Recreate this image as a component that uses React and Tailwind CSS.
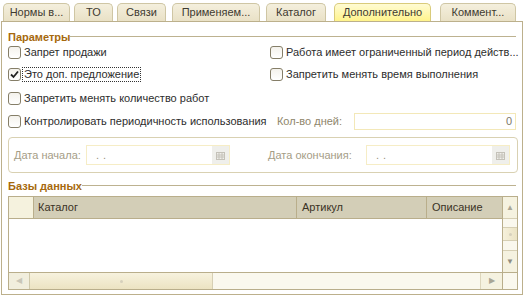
import React from "react";

const tabs = [
    { label: "Нормы в...", cls: "ml-[3px] w-[67px]" },
    { label: "ТО", cls: "ml-[4px] w-[39px]" },
    { label: "Связи", cls: "ml-[4px] w-[49px]" },
    { label: "Применяем...", cls: "ml-[6px] w-[88px]" },
    { label: "Каталог", cls: "ml-[6px] w-[60px]" },
    { label: "Дополнительно", cls: "ml-[8px] w-[97px]", active: true },
    { label: "Коммент...", cls: "ml-[9px] w-[76px]" },
];

const CheckBox = ({ checked }) => (
    <span className="w-[13px] h-[13px] shrink-0 rounded-[3px] border border-[#857e68] bg-gradient-to-b from-[#f4f2ec] to-white flex items-center justify-center">
        {checked && (
            <svg width="9" height="9" viewBox="0 0 9 9">
                <path d="M1 4.5 L3.5 7 L8 1.5" fill="none" stroke="#222" strokeWidth="1.8" />
            </svg>
        )}
    </span>
);

const Option = ({ label, checked, focused, className = "" }) => (
    <div className={"flex items-center h-[13px] shrink-0 " + className}>
        <CheckBox checked={checked} />
        <span
            className={
                "ml-[1px] whitespace-nowrap leading-[13px] " +
                (focused ? "border border-dotted border-[#333] px-[1px]" : "pl-[2px]")
            }
        >
            {label}
        </span>
    </div>
);

const SectionTitle = ({ title }) => (
    <div className="flex items-start h-[13px]">
        <span className="font-bold text-[#a6690d] leading-[13px]">{title}</span>
        <span className="flex-1 mt-[5px] border-t border-[#bdb290]" />
    </div>
);

const DateInput = () => (
    <div className="w-[144px] h-[20px] flex border border-[#f6edc6] bg-white">
        <span className="flex-1 pl-[9px] leading-[18px] text-[#9a937f] tracking-[4px]">..</span>
        <span className="w-[17px] bg-[#efefeb] flex items-center justify-center">
            <svg width="9" height="9" viewBox="0 0 9 9">
                <rect x="0.5" y="1.5" width="8" height="7" fill="none" stroke="#c4c1b8" />
                <path d="M0.5 4 H8.5 M0.5 6 H8.5 M3 1.5 V8.5 M6 1.5 V8.5" stroke="#c4c1b8" />
            </svg>
        </span>
    </div>
);

export default function App() {
    return (
        <div className="w-[526px] h-[299px] bg-white overflow-hidden font-['Liberation_Sans',Arial,sans-serif] text-[11px] text-[#2d2d2d]">
            <div className="flex items-end h-[21px]">
                {tabs.map((t) => (
                    <div
                        key={t.label}
                        className={
                            t.cls +
                            " h-[18px] rounded-t-[5px] border border-b-0 flex items-center justify-center whitespace-nowrap text-[#3e3a30] " +
                            (t.active
                                ? "bg-gradient-to-b from-[#fffbd2] to-[#fff38a] border-[#d9cb7a]"
                                : "bg-gradient-to-b from-[#f4efdd] to-[#e9e1c6] border-[#cfc6a4]")
                        }
                    >
                        {t.label}
                    </div>
                ))}
            </div>

            <div className="ml-[1px] w-[522px] h-[274px] border border-[#bcb08c] px-[6px] pt-[9px]">
                <SectionTitle title="Параметры" />

                <div className="flex mt-[2px]">
                    <Option label="Запрет продажи" className="w-[262px]" />
                    <Option label="Работа имеет ограниченный период действ..." />
                </div>

                <div className="flex mt-[9px]">
                    <Option label="Это доп. предложение" checked focused className="w-[262px]" />
                    <Option label="Запретить менять время выполнения" />
                </div>

                <Option label="Запретить менять количество работ" className="mt-[11px]" />

                <div className="flex items-center h-[17px] mt-[8px]">
                    <div className="w-[262px] flex items-center">
                        <CheckBox />
                        <span className="ml-[1px] pl-[2px] whitespace-nowrap">
                            Контролировать периодичность использования
                        </span>
                    </div>
                    <span className="ml-[8px] w-[77px] text-[#8f866b] whitespace-nowrap">Кол-во дней:</span>
                    <div className="w-[163px] h-[17px] border border-[#f3e8b8] text-right pr-[3px] leading-[15px] text-[#7d786a]">
                        0
                    </div>
                </div>

                <div className="mt-[7px] w-[510px] h-[36px] rounded-[4px] border border-[#d9d1b2] flex items-center pl-[5px]">
                    <span className="w-[72px] text-[#a59d86]">Дата начала:</span>
                    <DateInput />
                    <span className="ml-[38px] w-[98px] text-[#a59d86]">Дата окончания:</span>
                    <DateInput />
                </div>

                <div className="mt-[7px]">
                    <SectionTitle title="Базы данных" />
                </div>

                <div className="mt-[3px] w-[510px] h-[94px] border border-[#b9ae8b] flex flex-col">
                    <div className="flex h-[75px]">
                        <div className="w-[493px] flex flex-col">
                            <div className="flex h-[22px] bg-[#d3ceb7] border-b border-[#b9ae8b] text-[#3a3225]">
                                <div className="w-[25px] bg-[#f5f2de] border-r border-[#b9ae8b]" />
                                <div className="w-[263px] border-r border-[#b9ae8b] pl-[4px] leading-[21px]">Каталог</div>
                                <div className="w-[130px] border-r border-[#b9ae8b] pl-[5px] leading-[21px]">Артикул</div>
                                <div className="flex-1 pl-[5px] leading-[21px]">Описание</div>
                            </div>
                            <div className="flex-1 bg-white" />
                        </div>
                        <div className="w-[15px] border-l border-[#b9ae8b] flex flex-col bg-[#faf8ee]">
                            <div className="h-[22px] bg-[#f5f2e0] border-b border-[#d6cfb4] flex items-center justify-center text-[8px] text-[#a9a695]">
                                ▲
                            </div>
                            <div className="h-[8px]" />
                            <div className="h-[14px] border-y border-[#d6cfb4] bg-gradient-to-r from-[#f6f1dc] to-[#ebe3c4] flex items-center justify-center">
                                <span className="w-[3px] h-[3px] rounded-full bg-[#d6d0bc]" />
                            </div>
                            <div className="flex-1" />
                            <div className="h-[22px] border-t border-[#d6cfb4] bg-[#f5f2e0] flex items-center justify-center text-[8px] text-[#8f8c80]">
                                ▼
                            </div>
                        </div>
                    </div>
                    <div className="flex h-[17px] border-t border-[#b9ae8b] bg-[#faf8ee]">
                        <div className="w-[21px] border-r border-[#cfc8aa] bg-[#f1eedd] flex items-center justify-center text-[8px] text-[#c9c6b8]">
                            ◀
                        </div>
                        <div className="w-[183px] border-r border-[#d6cfb4] bg-gradient-to-b from-[#f7f2de] to-[#ece3c2] flex items-center justify-center">
                            <span className="w-[3px] h-[3px] rounded-full bg-[#d6d0bc]" />
                        </div>
                        <div className="flex-1" />
                        <div className="w-[22px] border-l border-[#ddd6bc] bg-[#f5f2e0] flex items-center justify-center text-[8px] text-[#a9a695]">
                            ▶
                        </div>
                        <div className="w-[15px] border-l border-[#b9ae8b] bg-[#faf8ee]" />
                    </div>
                </div>
            </div>
        </div>
    );
}
